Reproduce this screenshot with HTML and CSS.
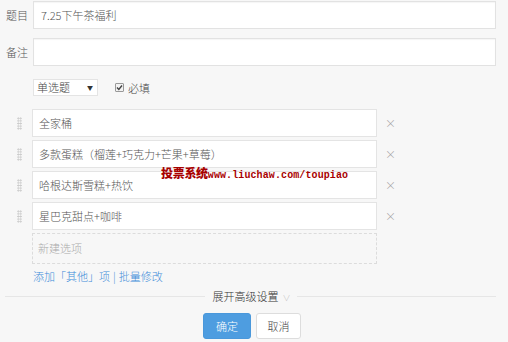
FILE: index.html
```html
<!DOCTYPE html>
<html lang="zh">
<head>
<meta charset="utf-8">
<link rel="stylesheet" href="styles.css">
</head>
<body>
<div class="form">
  <div class="row">
    <label class="lbl">题目</label>
    <div class="input">7.25下午茶福利</div>
  </div>
  <div class="row note">
    <label class="lbl">备注</label>
    <div class="input"></div>
  </div>
  <div class="type-row">
    <div class="select"><span>单选题</span><span class="arrow">▼</span></div>
    <div class="req"><span class="cb"><svg width="7" height="7" viewBox="0 0 7 7"><path d="M1 3.6 L2.8 5.4 L6 1.5" fill="none" stroke="#444" stroke-width="1.4"/></svg></span>必填</div>
  </div>
  <div class="options">
    <div class="opt"><span class="handle"></span><div class="oinput">全家桶</div><span class="del">×</span></div>
    <div class="opt"><span class="handle"></span><div class="oinput">多款蛋糕（榴莲+巧克力+芒果+草莓）</div><span class="del">×</span></div>
    <div class="opt"><span class="handle"></span><div class="oinput">哈根达斯雪糕+热饮</div><span class="del">×</span></div>
    <div class="opt"><span class="handle"></span><div class="oinput">星巴克甜点+咖啡</div><span class="del">×</span></div>
    <div class="opt"><span class="handle blank"></span><div class="newopt">新建选项</div></div>
  </div>
  <div class="links"><a>添加「其他」项</a><span class="sep">|</span><a>批量修改</a></div>
  <div class="divider"><span class="line"></span><span class="dtext">展开高级设置<span class="chev">∨</span></span><span class="line"></span></div>
  <div class="buttons"><button class="btn ok">确定</button><button class="btn cancel">取消</button></div>
</div>
<div class="watermark"><span class="wcn">投票系统</span><span class="wen">www.liuchaw.com/toupiao</span></div>
</body>
</html>
```

FILE: styles.css
```css
html, body { margin: 0; padding: 0; }
body {
  background: #f7f7f7;
  font-family: "Noto Sans CJK SC", "Noto Sans", sans-serif;
  font-weight: 300;
  font-size: 11px;
  color: #444;
  width: 508px;
  height: 342px;
  overflow: hidden;
  position: relative;
}
.form { padding: 1px 12px 0 6px; }
.row { display: flex; align-items: center; height: 28px; }
.row.note { margin-top: 9px; }
.lbl { width: 27px; color: #555; font-size: 11px; }
.input {
  flex: 0 0 463px;
  height: 28px;
  box-sizing: border-box;
  background: #fff;
  border: 1px solid #e2e2e2;
  box-shadow: inset 0 1px 1px rgba(0,0,0,0.04);
  padding: 0 7px;
  line-height: 26px;
  color: #555;
}
.type-row { display: flex; align-items: center; margin: 13px 0 0 27px; height: 17px; }
.select {
  width: 65px; height: 17px; box-sizing: border-box;
  background: #fff; border: 1px solid #e4e4e4;
  display: flex; justify-content: space-between; align-items: center;
  padding: 0 4px 0 3px; color: #444; line-height: 15px;
}
.arrow { font-size: 6px; color: #333; }
.req { display: flex; align-items: center; margin-left: 17px; color: #444; }
.cb {
  width: 7px; height: 7px; border: 1px solid #999; background: #f3f3f3;
  margin-right: 4px; display: flex; align-items: center; justify-content: center;
  border-radius: 1px;
}
.cb svg { display: block; }
.options { margin-top: 13px; }
.opt { display: flex; align-items: center; height: 28px; margin-bottom: 3px; }
.handle {
  width: 5px; height: 13px; margin-left: 11px; margin-right: 10px;
  background-image: radial-gradient(circle, #c8c8c8 0.8px, transparent 1px);
  background-size: 2.5px 2.6px;
}
.handle.blank { background: none; }
.oinput {
  width: 345px; height: 28px; box-sizing: border-box;
  background: #fff; border: 1px solid #e4e4e4;
  padding: 0 6px; line-height: 26px; color: #555;
}
.del { margin-left: 8px; color: #999; font-size: 11px; }
.newopt {
  width: 345px; height: 31px; box-sizing: border-box;
  border: 1px dashed #dcdcdc; margin-top: 2px;
  padding: 0 5px; line-height: 29px; color: #aaa;
}
.links { margin: 7px 0 0 27px; color: #3d8cd9; height: 16px; line-height: 16px; }
.links a { color: #3d8cd9; }
.sep { margin: 0 3px; }
.divider { display: flex; align-items: center; margin: 5px 0 0 -1px; height: 14px; }
.line { flex: 1; height: 1px; background: #e6e6e6; }
.dtext { padding: 0 6px 0 8px; color: #333; }
.chev { color: #bbb; font-size: 8px; margin-left: 4px; }
.buttons { display: flex; justify-content: center; gap: 5px; margin-top: 10px; padding-left: 2px; }
.btn {
  font-family: inherit; font-weight: 300; font-size: 11px; height: 26px; border-radius: 3px;
  padding: 0; cursor: pointer;
}
.ok { width: 48px; background: #4e9de0; color: #fff; border: 1px solid #4a98db; }
.cancel { width: 45px; background: #fff; color: #444; border: 1px solid #ddd; }
.watermark {
  position: absolute; left: 161px; top: 164px;
  color: #a80000; font-weight: bold; white-space: nowrap;
  display: flex; align-items: baseline;
}
.wcn { font-family: "Noto Sans CJK SC", sans-serif; font-size: 12px; font-weight: 900; letter-spacing: -0.3px; }
.wen { font-family: "Liberation Mono", monospace; font-size: 10px; letter-spacing: 0.1px; }
```
